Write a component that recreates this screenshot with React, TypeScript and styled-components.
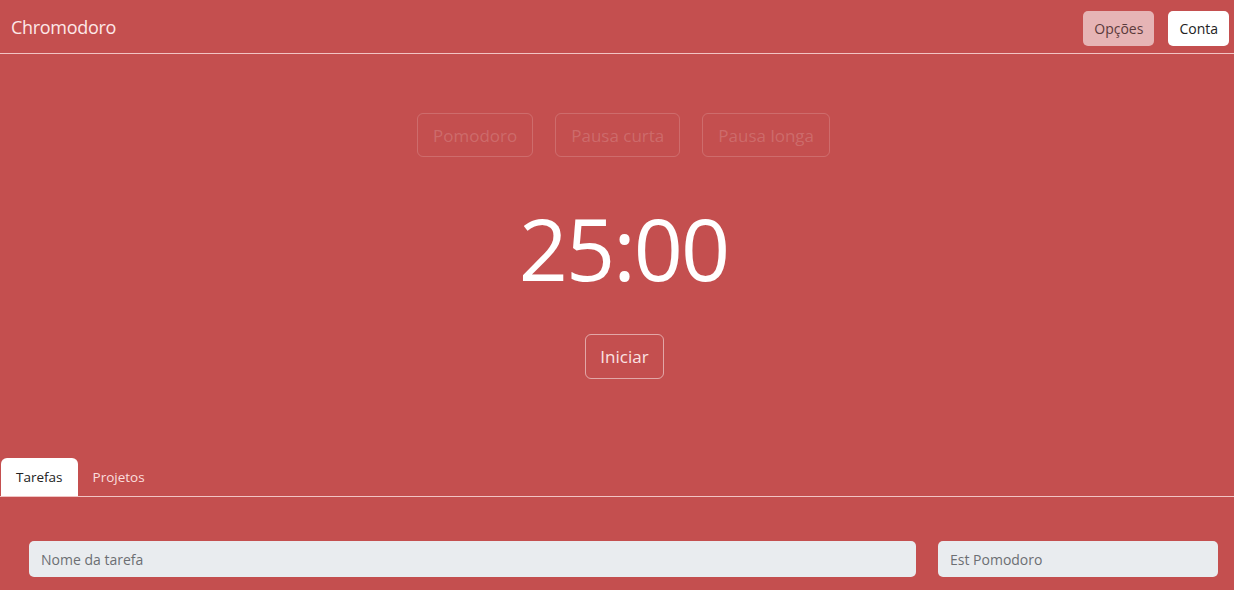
import React from "react";
import styled, { createGlobalStyle } from "styled-components";

const Global = createGlobalStyle`
  html, body { margin: 0; padding: 0; background: #c44f4f; }
  body { font-family: "Open Sans", "Noto Sans", sans-serif; }
  * { box-sizing: border-box; }
`;

const Page = styled.div`
  width: 1234px;
  height: 590px;
  overflow: hidden;
  background: #c44f4f;
  display: flex;
  flex-direction: column;
`;

const Header = styled.header`
  height: 54px;
  border-bottom: 1px solid #f2c4c4;
  display: flex;
  align-items: center;
  justify-content: space-between;
  padding: 0 5px 0 11px;
`;

const Brand = styled.div`
  color: #fde8e8;
  font-size: 18px;
  letter-spacing: -0.3px;
`;

const HeaderActions = styled.div`
  display: flex;
  gap: 14px;
  align-items: center;
  padding-top: 3px;
`;

const HeaderButton = styled.button<{ $light?: boolean }>`
  height: 35px;
  padding: 0 11px;
  border: none;
  border-radius: 5px;
  font-family: inherit;
  font-size: 14px;
  background: ${(p) => (p.$light ? "#ffffff" : "#e6b4b5")};
  color: ${(p) => (p.$light ? "#222" : "#5b3a3b")};
`;

const Main = styled.main`
  display: flex;
  flex-direction: column;
  align-items: center;
  padding-top: 59px;
  padding-left: 13px;
  height: 405px;
`;

const Modes = styled.div`
  display: flex;
  gap: 22px;
`;

const ModeButton = styled.button`
  height: 44px;
  padding: 0 15px;
  background: transparent;
  border: 1px solid rgba(255, 255, 255, 0.17);
  border-radius: 6px;
  color: rgba(255, 255, 255, 0.17);
  font-family: inherit;
  font-size: 17px;
`;

const Timer = styled.div`
  margin-top: 36px;
  color: #ffffff;
  font-size: 86px;
  line-height: 110px;
  letter-spacing: -2px;
`;

const StartButton = styled.button`
  margin-top: 31px;
  height: 45px;
  padding: 0 14px;
  background: transparent;
  border: 1px solid rgba(255, 255, 255, 0.5);
  border-radius: 6px;
  color: #fbe3e3;
  font-family: inherit;
  font-size: 17px;
  margin-left: 2px;
`;

const Tabs = styled.nav`
  display: flex;
  align-items: flex-end;
  height: 38px;
  border-bottom: 1px solid #f2c4c4;
  padding-left: 1px;
`;

const Tab = styled.div<{ $active?: boolean }>`
  height: 38px;
  display: flex;
  align-items: center;
  padding: 0 15px;
  font-size: 13.5px;
  border-radius: 6px 6px 0 0;
  background: ${(p) => (p.$active ? "#ffffff" : "transparent")};
  color: ${(p) => (p.$active ? "#222" : "#fbdede")};
`;

const Form = styled.div`
  display: grid;
  grid-template-columns: 887px 280px;
  column-gap: 22px;
  padding: 44px 16px 0 29px;
`;

const Input = styled.input`
  height: 36px;
  border: none;
  border-radius: 5px;
  background: #e9ecef;
  padding: 0 12px;
  font-family: inherit;
  font-size: 14px;
  color: #333;
  &::placeholder { color: #6c6f73; }
`;

export default function App() {
  return (
    <Page>
      <Global />
      <Header>
        <Brand>Chromodoro</Brand>
        <HeaderActions>
          <HeaderButton>Opções</HeaderButton>
          <HeaderButton $light>Conta</HeaderButton>
        </HeaderActions>
      </Header>
      <Main>
        <Modes>
          <ModeButton>Pomodoro</ModeButton>
          <ModeButton>Pausa curta</ModeButton>
          <ModeButton>Pausa longa</ModeButton>
        </Modes>
        <Timer>25:00</Timer>
        <StartButton>Iniciar</StartButton>
      </Main>
      <Tabs>
        <Tab $active>Tarefas</Tab>
        <Tab>Projetos</Tab>
      </Tabs>
      <Form>
        <Input placeholder="Nome da tarefa" />
        <Input placeholder="Est Pomodoro" />
      </Form>
    </Page>
  );
}
